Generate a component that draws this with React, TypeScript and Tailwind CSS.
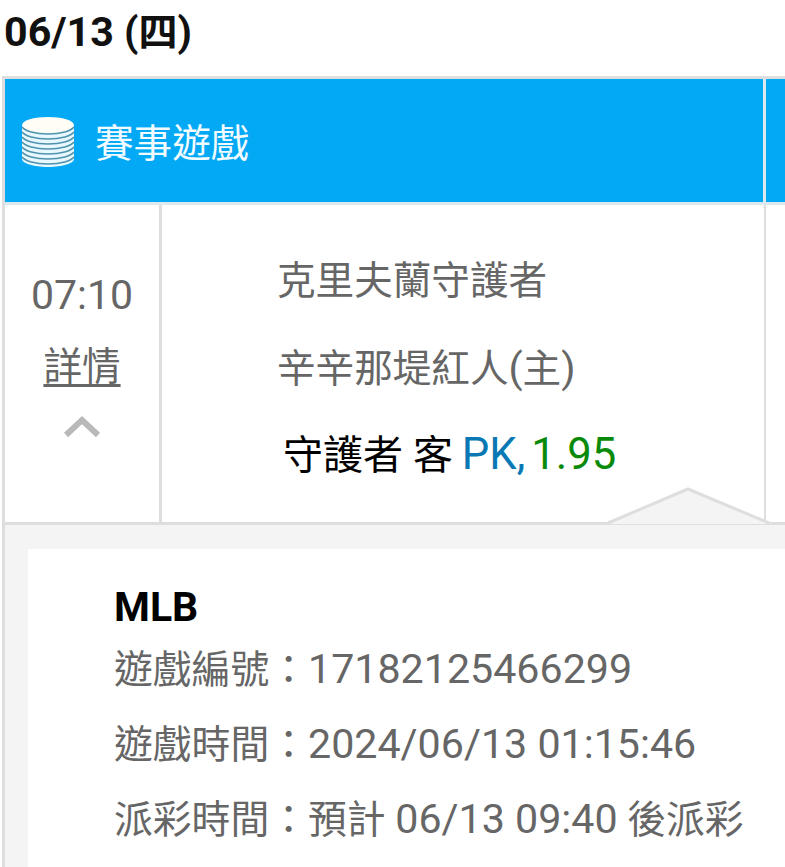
import React from "react";

const font = { fontFamily: '"Roboto", "Noto Sans CJK TC", sans-serif' };

const CoinStack = () => (
  <svg width="54" height="52" viewBox="0 0 54 52" className="shrink-0 -ml-[1px]">
    <path d="M1 10v33c0 4 11 8 26 8s26-4 26-8V10z" fill="#e8f8ff" />
    <ellipse cx="27" cy="9" rx="26" ry="8" fill="#fffdf5" />
    {[14, 19, 24, 29, 34, 39, 44].map((y) => (
      <path key={y} d={`M1 ${y - 3}c3 4 13 7 26 7s23-3 26-7`} fill="none" stroke="#4f93ad" strokeWidth="1.5" />
    ))}
  </svg>
);

// latin text and digits run larger than the CJK around them in the reference
const Num = ({ children }: { children: React.ReactNode }) => <span className="text-[41.2px]">{children}</span>;

const DetailLine = ({ label, children }: { label: string; children: React.ReactNode }) => (
  <div className="h-[75px] text-[38.8px] leading-[75px] text-[#666] whitespace-nowrap">
    {label}：{children}
  </div>
);

export default function App() {
  return (
    <div className="w-[785px] h-[867px] overflow-hidden bg-white" style={font}>
      <div className="h-[76px] pl-[4px] pt-[8px] text-[39px] leading-[48px] font-bold text-[#111]">
        <Num>06/13 (</Num>四<Num>)</Num>
      </div>

      <div className="ml-[2px] border-l-[3px] border-t-[3px] border-[#dedede]">
        <div className="flex h-[126px] border-b-[3px] border-[#dce9ef] bg-[#03a9f4]">
          <div className="flex w-[758px] items-center gap-[20px] pl-[17px] pt-[2px] text-[38.6px] text-[#f2fbff]">
            <CoinStack />
            <span className="pt-[5px]">賽事遊戲</span>
          </div>
          <div className="w-[3px] bg-[#dce9ef]" />
        </div>

        <div className="relative flex h-[317px]">
          <div className="flex w-[154px] flex-col items-center pt-[67px] text-[#666]">
            <div className="text-[41px] leading-[46px]">07:10</div>
            <div className="mt-[26px] text-[38.6px] leading-[46px] underline underline-offset-4">詳情</div>
            <svg width="36" height="24" viewBox="0 0 36 24" className="mt-[25px]">
              <path d="M2 20 18 5l16 15" fill="none" stroke="#b9b9b9" strokeWidth="6" />
            </svg>
          </div>
          <div className="w-[3px] bg-[#dedede]" />
          <div className="w-[602px] pt-[51px] text-[38.6px]">
            <div className="pl-[115px] leading-[50px] text-[#666]">克里夫蘭守護者</div>
            <div className="mt-[37px] pl-[115px] leading-[50px] text-[#666]">
              辛辛那堤紅人<Num>(</Num>主<Num>)</Num>
            </div>
            <div className="mt-[36px] pl-[121px] text-[40px] leading-[50px] text-black whitespace-nowrap">
              守護者 客 <span className="-ml-[1px] text-[43.6px] text-[#0a78b4]">PK,</span>
              <span className="ml-[6px] text-[43.6px] text-[#0a8a0a]">1.95</span>
            </div>
          </div>
          <div className="w-[2px] bg-[#dedede]" />
          {/* pointer up to the open detail panel */}
          <svg width="164" height="38" viewBox="0 0 164 38" className="absolute left-[603px] top-[282px]">
            <path d="M0 37 80 2l81 35z" fill="#f4f4f4" />
            <path d="M0 36 80 2l81 34" fill="none" stroke="#dedede" strokeWidth="3" />
          </svg>
        </div>

        <div className="border-t-[3px] border-[#dedede] bg-[#f4f4f4] pl-[23px] pt-[24px]">
          <div className="bg-white pl-[86px] pt-[33px] h-[320px]">
            <div className="text-[41px] leading-[50px] font-bold text-black">MLB</div>
            <div>
              <DetailLine label="遊戲編號"><Num>17182125466299</Num></DetailLine>
              <DetailLine label="遊戲時間"><Num>2024/06/13 01:15:46</Num></DetailLine>
              <DetailLine label="派彩時間">預計 <Num>06/13 09:40</Num> 後派彩</DetailLine>
            </div>
          </div>
        </div>
      </div>
    </div>
  );
}
